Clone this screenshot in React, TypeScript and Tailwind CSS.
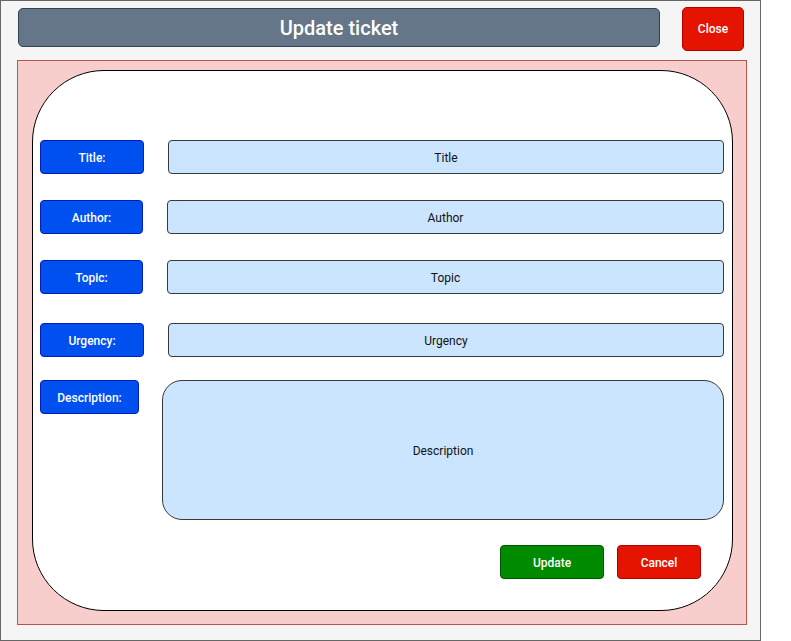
const font = { fontFamily: "Roboto, 'Liberation Sans', sans-serif" };

function Label({ text, className = "" }: { text: string; className?: string }) {
  return (
    <div
      className={`flex h-[34px] items-center justify-center rounded-[4px] border border-[#001dbc] bg-[#0050ef] pt-[2px] text-[12px] font-medium text-white ${className}`}
    >
      {text}
    </div>
  );
}

function Field({ text, className = "" }: { text: string; className?: string }) {
  return (
    <div
      className={`flex items-center justify-center border border-[#36393d] bg-[#cce5ff] pt-[2px] text-[12px] text-[#111] ${className}`}
    >
      {text}
    </div>
  );
}

export default function App() {
  return (
    <div className="h-[641px] w-[791px] bg-white" style={font}>
      <div className="h-[641px] w-[761px] border border-[#666] bg-[#f5f5f5]">
        {/* header */}
        <div className="flex items-start pl-[17px] pt-[6px]">
          <div className="mt-[1px] flex h-[39px] w-[642px] items-center justify-center rounded-[5px] border border-[#314354] bg-[#647687] text-[20px] font-medium text-white">
            Update ticket
          </div>
          <button
            type="button"
            className="ml-[22px] flex h-[44px] w-[62px] items-center justify-center rounded-[5px] border border-[#b20000] bg-[#e51400] text-[12px] font-medium text-white"
          >
            Close
          </button>
        </div>

        {/* pink container */}
        <div className="ml-[16px] mt-[9px] h-[565px] w-[730px] border border-[#b85450] bg-[#f8cecc] pl-[14px] pt-[9px]">
          <div className="h-[541px] w-[701px] rounded-[72px] border border-black bg-white pl-[7px] pt-[69px]">
            <div className="flex items-center">
              <Label text="Title:" className="w-[104px]" />
              <Field text="Title" className="ml-[24px] h-[34px] w-[556px] rounded-[4px]" />
            </div>
            <div className="mt-[26px] flex items-center">
              <Label text="Author:" className="w-[103px]" />
              <Field text="Author" className="ml-[24px] h-[34px] w-[557px] rounded-[4px]" />
            </div>
            <div className="mt-[26px] flex items-center">
              <Label text="Topic:" className="w-[103px]" />
              <Field text="Topic" className="ml-[24px] h-[34px] w-[557px] rounded-[4px]" />
            </div>
            <div className="mt-[29px] flex items-center">
              <Label text="Urgency:" className="w-[104px]" />
              <Field text="Urgency" className="ml-[24px] h-[34px] w-[556px] rounded-[4px]" />
            </div>
            <div className="mt-[23px] flex items-start">
              <Label text="Description:" className="w-[99px]" />
              <Field text="Description" className="ml-[23px] h-[140px] w-[562px] rounded-[20px]" />
            </div>
            <div className="mt-[25px] flex justify-end gap-[13px] pr-[31px]">
              <button
                type="button"
                className="flex h-[34px] w-[104px] items-center justify-center rounded-[4px] border border-[#005700] bg-[#008a00] pt-[2px] text-[12px] font-medium text-white"
              >
                Update
              </button>
              <button
                type="button"
                className="flex h-[34px] w-[84px] items-center justify-center rounded-[4px] border border-[#b20000] bg-[#e51400] pt-[2px] text-[12px] font-medium text-white"
              >
                Cancel
              </button>
            </div>
          </div>
        </div>
      </div>
    </div>
  );
}
